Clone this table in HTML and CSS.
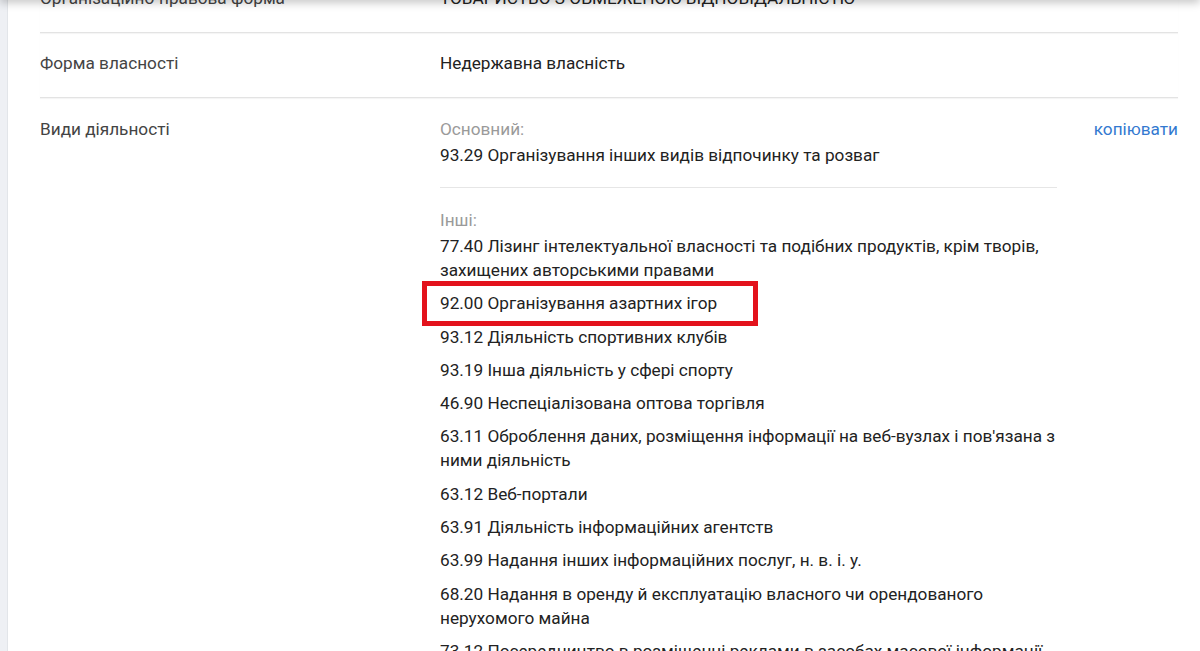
FILE: index.html
```html
<!DOCTYPE html>
<html lang="uk">
<head>
<meta charset="utf-8">
<title>Види діяльності</title>
<link rel="stylesheet" href="styles.css">
</head>
<body>
<div class="topbar"></div>
<div class="card">
  <div class="row">
    <div class="label">Організаційно-правова форма</div>
    <div class="value">ТОВАРИСТВО З ОБМЕЖЕНОЮ ВІДПОВІДАЛЬНІСТЮ</div>
  </div>
  <div class="row">
    <div class="label">Форма власності</div>
    <div class="value">Недержавна власність</div>
  </div>
  <div class="row last">
    <div class="label">Види діяльності</div>
    <div class="value">
      <div class="group">
        <div class="caption">Основний:</div>
        <div class="item">93.29 Організування інших видів відпочинку та розваг</div>
      </div>
      <div class="group others">
        <div class="caption">Інші:</div>
        <ul class="list">
          <li class="item">77.40 Лізинг інтелектуальної власності та подібних продуктів, крім творів, захищених авторськими правами</li>
          <li class="item marked">92.00 Організування азартних ігор</li>
          <li class="item">93.12 Діяльність спортивних клубів</li>
          <li class="item">93.19 Інша діяльність у сфері спорту</li>
          <li class="item">46.90 Неспеціалізована оптова торгівля</li>
          <li class="item">63.11 Оброблення даних, розміщення інформації на веб-вузлах і пов'язана з ними діяльність</li>
          <li class="item">63.12 Веб-портали</li>
          <li class="item">63.91 Діяльність інформаційних агентств</li>
          <li class="item">63.99 Надання інших інформаційних послуг, н. в. і. у.</li>
          <li class="item">68.20 Надання в оренду й експлуатацію власного чи орендованого нерухомого майна</li>
          <li class="item">73.12 Посередництво в розміщенні реклами в засобах масової інформації</li>
        </ul>
      </div>
    </div>
    <a class="copy" href="#">копіювати</a>
  </div>
</div>
</body>
</html>
```
FILE: styles.css
```css
html, body {
  margin: 0;
  padding: 0;
}
body {
  background: #eef0f4;
  font-family: Roboto, "Noto Sans", sans-serif;
  font-size: 17.2px;
  line-height: 24px;
  color: #212121;
  overflow: hidden;
}
.topbar {
  position: fixed;
  top: -12px;
  left: 0;
  right: 0;
  height: 12px;
  background: #fff;
  box-shadow: 0 3px 8px rgba(0, 0, 0, 0.22);
  z-index: 5;
}
.card {
  margin-left: 7px;
  margin-top: -32px;
  background: #fff;
  border-left: 1px solid #e2e5e9;
  padding: 0 22px 0 32px;
  min-height: 720px;
}
.row {
  display: flex;
  padding: 18px 0 22px;
  border-bottom: 1px solid #e3e3e3;
  box-shadow: 0 1px 1px rgba(0, 0, 0, 0.04);
}
.row.last {
  padding-top: 19px;
  border-bottom: none;
  box-shadow: none;
}
.label {
  width: 400px;
  flex: none;
  color: #444;
}
.value {
  width: 617px;
  flex: none;
  color: #222;
}
.caption {
  color: #9a9a9a;
  margin-bottom: 2px;
}
.group {
  padding-bottom: 20px;
  border-bottom: 1px solid #e6e6e6;
}
.group.others {
  border-bottom: none;
  padding-top: 20px;
}
.list {
  list-style: none;
  margin: 0;
  padding: 0;
  display: flex;
  flex-direction: column;
  gap: 9.3px;
}
.item.marked {
  position: relative;
}
.item.marked::after {
  content: "";
  position: absolute;
  left: -18px;
  top: -10px;
  width: 326px;
  height: 35px;
  border: 5px solid #e3121c;
}
.copy {
  margin-left: auto;
  color: #3379d0;
  text-decoration: none;
}
```
